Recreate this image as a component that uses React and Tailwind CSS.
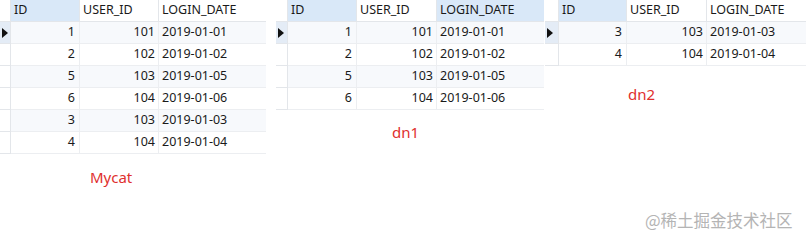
import React from "react";

const Arrow = () => (
  <svg width="6" height="10" viewBox="0 0 6 10"><path d="M0 0 L6 5 L0 10 Z" fill="#111" /></svg>
);

function Table({ rows, cols, hl }) {
  return (
    <div className={`grid ${cols} text-[12.5px] text-[#1a1a1a]`} style={{ fontFamily: '"Noto Sans", "Open Sans", sans-serif' }}>
      <div className="h-[22px] border-r border-b border-[#e3e6ea] bg-white" />
      <div className={`h-[22px] border-r border-b border-[#e3e6ea] pl-[3px] flex items-center ${hl.includes(0) ? "bg-[#d9e8f8]" : "bg-white"}`}>ID</div>
      <div className={`h-[22px] border-r border-b border-[#e3e6ea] pl-[3px] flex items-center ${hl.includes(1) ? "bg-[#d9e8f8]" : "bg-white"}`}>USER_ID</div>
      <div className={`h-[22px] border-b border-[#e3e6ea] pl-[3px] flex items-center ${hl.includes(2) ? "bg-[#d9e8f8]" : "bg-white"}`}>LOGIN_DATE</div>
      {rows.map((r, i) => {
        const bg = i % 2 === 1 ? "bg-white" : "bg-[#f7f9fc]";
        return (
          <React.Fragment key={i}>
            <div className={`h-[22px] border-r border-b border-[#e3e6ea] flex items-center pl-[2px] ${i === 0 ? "bg-[#e4ecf6]" : "bg-white"}`}>{i === 0 ? <Arrow /> : null}</div>
            <div className={`h-[22px] border-r border-b border-[#eceef1] ${bg} flex items-center justify-end pr-[4px]`}>{r[0]}</div>
            <div className={`h-[22px] border-r border-b border-[#eceef1] ${bg} flex items-center justify-end pr-[3px]`}>{r[1]}</div>
            <div className={`h-[22px] border-b border-[#eceef1] ${bg} flex items-center pl-[3px]`}>{r[2]}</div>
          </React.Fragment>
        );
      })}
    </div>
  );
}

const label = { fontFamily: '"Noto Sans", "Open Sans", sans-serif' };

export default function App() {
  return (
    <div className="w-[806px] h-[242px] bg-white relative overflow-hidden">
      <div className="flex items-start">
        <div className="w-[266px] shrink-0">
          <Table
            cols="grid-cols-[11px_69px_79px_107px]"
            hl={[0]}
            rows={[
              [1, 101, "2019-01-01"],
              [2, 102, "2019-01-02"],
              [5, 103, "2019-01-05"],
              [6, 104, "2019-01-06"],
              [3, 103, "2019-01-03"],
              [4, 104, "2019-01-04"],
            ]}
          />
          <div className="pl-[90px] pt-[12px] text-[15px] text-[#e0302e]" style={label}>Mycat</div>
        </div>
        <div className="w-[268px] ml-[10px] shrink-0">
          <Table
            cols="grid-cols-[12px_69px_80px_107px]"
            hl={[0, 2]}
            rows={[
              [1, 101, "2019-01-01"],
              [2, 102, "2019-01-02"],
              [5, 103, "2019-01-05"],
              [6, 104, "2019-01-06"],
            ]}
          />
          <div className="pl-[116px] pt-[11px] text-[15px] text-[#e0302e]" style={label}>dn1</div>
        </div>
        <div className="w-[261px] ml-[1px] shrink-0">
          <Table
            cols="grid-cols-[14px_68px_80px_99px]"
            hl={[0]}
            rows={[
              [3, 103, "2019-01-03"],
              [4, 104, "2019-01-04"],
            ]}
          />
          <div className="pl-[83px] pt-[17px] text-[15px] text-[#e0302e]" style={label}>dn2</div>
        </div>
      </div>
      <div className="absolute left-[645px] top-[208px] text-[16.5px] text-[#b4b4b4]" style={{ fontFamily: '"Noto Sans CJK SC", sans-serif' }}>@稀土掘金技术社区</div>
    </div>
  );
}
